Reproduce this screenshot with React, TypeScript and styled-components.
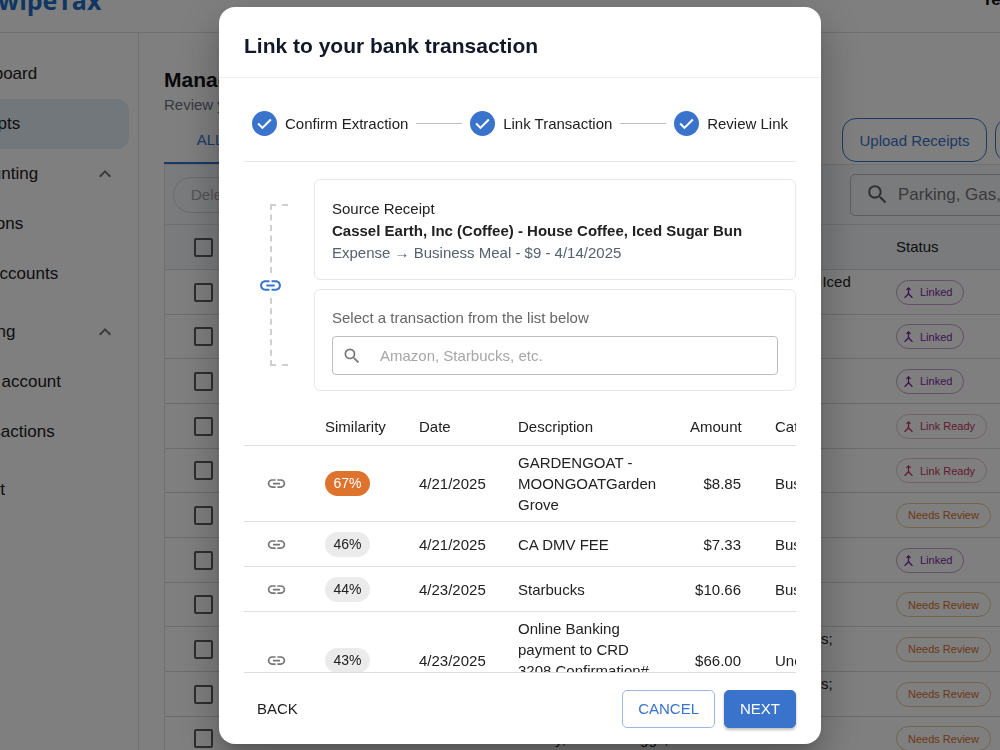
import React from "react";
import styled, { createGlobalStyle } from "styled-components";
import { MdExpandLess, MdLink, MdMerge, MdSearch } from "react-icons/md";

const blue = "#3973cc";
const line = "#e0e0e0";

const GlobalStyle = createGlobalStyle`
  * { box-sizing: border-box; }
  body {
    margin: 0;
    height: 100vh;
    overflow: hidden;
    background: #fff;
    color: #212121;
    font-family: "Liberation Sans", Arial, sans-serif;
    font-size: 15px;
  }
  button, input { font: inherit; }
  h1, h2, p { margin: 0; }
`;

/* ---------- page behind the dialog ---------- */

const Shell = styled.div`
  margin: -32px -160px 0 -56px;
`;

const Header = styled.header`
  display: flex;
  align-items: center;
  justify-content: space-between;
  height: 65px;
  padding: 0 62px 0 40px;
  border-bottom: 1px solid ${line};
`;

const Brand = styled.a`
  color: #1f6fc4;
  font-family: "Open Sans", sans-serif;
  font-size: 25px;
  font-weight: 700;
  text-decoration: none;
`;

const UserName = styled.span`
  font-size: 17px;
  font-weight: 700;
  color: #111;
`;

const Columns = styled.div`
  display: flex;
`;

const Sidebar = styled.nav`
  flex: none;
  width: 195px;
  height: 100vh;
  padding: 16px 9px 0 0;
  border-right: 1px solid ${line};
`;

const NavGroup = styled.div`
  margin-bottom: 8px;
`;

const NavItem = styled.a<{ $active?: boolean; $nested?: boolean }>`
  display: flex;
  align-items: center;
  justify-content: space-between;
  height: 50px;
  padding: 0 12px 0 ${(p) => (p.$nested ? 14 : 10)}px;
  border-radius: 12px;
  background: ${(p) => (p.$active ? "#e3eef7" : "transparent")};
  color: #212121;
  font-size: 17px;
  text-decoration: none;
  white-space: nowrap;

  svg {
    color: #757575;
  }
`;

const Main = styled.main`
  flex: 1;
  min-width: 0;
  padding: 35px 0 0 25px;
`;

const PageTitle = styled.h1`
  font-size: 21px;
  line-height: 24px;
  color: #111;
`;

const PageHint = styled.p`
  margin-top: 3px;
  line-height: 20px;
  color: #6b7280;
`;

const TabRow = styled.div`
  display: flex;
  align-items: flex-end;
  justify-content: space-between;
  height: 50px;
  border-bottom: 1px solid ${line};
`;

const Tab = styled.button`
  height: 49px;
  width: 92px;
  padding: 2px 0 0;
  border: 0;
  border-bottom: 2px solid ${blue};
  background: none;
  color: ${blue};
`;

const TopActions = styled.div`
  display: flex;
  gap: 8px;
  width: 318px;
  padding-bottom: 2px;
`;

const RoundButton = styled.button`
  flex: none;
  width: 145px;
  height: 44px;
  border: 1px solid ${blue};
  border-radius: 14px;
  background: #fff;
  color: ${blue};
`;

const Toolbar = styled.div`
  display: flex;
  align-items: center;
  justify-content: space-between;
  height: 60px;
  padding-left: 8px;
  border-left: 1px solid ${line};
  border-bottom: 1px solid ${line};
  background: #f3f7fb;
`;

const PillButton = styled.button`
  height: 36px;
  padding: 0 17px;
  border: 1px solid #d4d6d8;
  border-radius: 18px;
  background: none;
  color: #a6a6a6;
`;

const PageSearch = styled.label`
  display: flex;
  align-items: center;
  gap: 8px;
  width: 310px;
  height: 42px;
  padding-left: 14px;
  border: 1px solid #bdbdbd;
  border-radius: 5px;
  color: #616161;

  input {
    flex: 1;
    min-width: 0;
    padding: 0;
    border: 0;
    background: none;
    font-size: 17px;
  }

  input::placeholder {
    color: #757575;
  }
`;

const ReceiptTable = styled.table`
  width: 100%;
  table-layout: fixed;
  border-collapse: separate;
  border-spacing: 0;
  border-left: 1px solid ${line};
  line-height: 20px;

  tr {
    height: 45px;
  }

  tbody tr:nth-child(3n + 2) {
    height: 44px;
  }

  th {
    background: #f3f7fb;
    font-weight: 400;
    text-align: left;
  }

  th, td {
    padding: 0 12px 0 0;
    border-bottom: 1px solid #d8d8d8;
  }
`;

const Tick = styled.input`
  display: block;
  width: 19px;
  height: 19px;
  margin: 0 0 0 29px;
  appearance: none;
  border: 2px solid #5c5c5c;
  border-radius: 2px;
`;

const tones = {
  linked: { text: "#7b1fa2", border: "#c3a0d0" },
  ready: { text: "#c2365f", border: "#e0c8ce" },
  review: { text: "#d9702a", border: "#e8c49a" },
};

type Tone = keyof typeof tones;

const StatusChip = styled.span<{ $tone: Tone }>`
  display: inline-flex;
  align-items: center;
  gap: 4px;
  height: 25px;
  padding: 0 11px 0 ${(p) => (p.$tone === "review" ? 11 : 4)}px;
  border: 1px solid ${(p) => tones[p.$tone].border};
  border-radius: 13px;
  color: ${(p) => tones[p.$tone].text};
  font-size: 11px;
  white-space: nowrap;
  vertical-align: middle;
`;

/* ---------- dialog ---------- */

const Backdrop = styled.div`
  position: fixed;
  inset: 0;
  display: flex;
  justify-content: center;
  padding: 7px 0 6px 40px;
  background: rgba(0, 0, 0, 0.5);
`;

const Dialog = styled.section`
  display: flex;
  flex-direction: column;
  width: 602px;
  max-width: 100%;
  border-radius: 16px;
  background: #fff;
  box-shadow: 0 11px 15px -7px rgba(0, 0, 0, 0.2), 0 24px 38px 3px rgba(0, 0, 0, 0.14),
    0 9px 46px 8px rgba(0, 0, 0, 0.12);
`;

const DialogTitle = styled.h2`
  flex: none;
  padding: 25px 25px 0;
  height: 71px;
  border-bottom: 1px solid #eeeeee;
  color: #111827;
  font-size: 21px;
  line-height: 28px;
`;

const DialogBody = styled.div`
  flex: 1;
  min-height: 0;
  margin: 0 25px;
  overflow: hidden auto;
  scrollbar-width: none;
`;

const Stepper = styled.ol`
  display: flex;
  align-items: center;
  gap: 8px;
  margin: 0 0 17px;
  padding: 33px 8px 25px;
  border-bottom: 1px solid #e8e8e8;
  list-style: none;
`;

const Step = styled.li`
  display: flex;
  align-items: center;
  gap: 8px;
  white-space: nowrap;
`;

const Connector = styled.li`
  flex: 1;
  height: 1px;
  background: #bdbdbd;
`;

const LinkArea = styled.div`
  display: flex;
`;

const Bracket = styled.div`
  display: flex;
  flex-direction: column;
  align-items: flex-start;
  width: 70px;
  padding: 25px 0;
  color: ${blue};

  svg {
    margin-left: 14px;
  }
`;

const BracketArm = styled.span<{ $side: "top" | "bottom" }>`
  flex: 1;
  width: 18px;
  margin-left: 26px;
  border-left: 2px dashed #d0d0d0;
  border-${(p) => p.$side}: 2px dashed #d0d0d0;
`;

const Cards = styled.div`
  display: flex;
  flex: 1;
  flex-direction: column;
  gap: 9px;
`;

const Card = styled.div`
  padding: 18px 17px 15px;
  border: 1px solid #e8e8e8;
  border-radius: 6px;
  line-height: 22px;
`;

const Muted = styled.p`
  color: #556070;
`;

const SearchLabel = styled.label`
  display: block;
  margin-bottom: 8px;
  line-height: 20px;
  color: #666;
`;

const SearchField = styled.div`
  display: flex;
  align-items: center;
  gap: 18px;
  height: 39px;
  padding: 0 9px;
  border: 1px solid #bdbdbd;
  border-radius: 4px;
  color: #757575;

  input {
    flex: 1;
    min-width: 0;
    padding: 0;
    border: 0;
    outline: 0;
  }

  input::placeholder {
    color: #a6a6a6;
  }
`;

const TableClip = styled.div`
  margin-top: 17px;
  overflow: hidden;
`;

const MatchTable = styled.table`
  width: 640px;
  table-layout: fixed;
  border-collapse: separate;
  border-spacing: 0;
  line-height: 21px;

  th, td {
    padding: 6px 17px;
    border-bottom: 1px solid ${line};
    font-weight: 400;
    text-align: left;
  }

  th {
    height: 38px;
  }

  td {
    height: 45px;
  }

  th:nth-child(5), td:nth-child(5) {
    text-align: right;
  }

  td:nth-child(6) {
    white-space: nowrap;
  }
`;

const LinkButton = styled.button`
  display: flex;
  justify-content: center;
  width: 30px;
  padding: 0;
  border: 0;
  background: none;
  color: #757575;
`;

const Score = styled.span<{ $strong?: boolean }>`
  display: flex;
  align-items: center;
  justify-content: center;
  width: 45px;
  height: 25px;
  border-radius: 13px;
  background: ${(p) => (p.$strong ? "#de732d" : "#ebebeb")};
  color: ${(p) => (p.$strong ? "#fff" : "#212121")};
  font-size: 14px;
`;

const Footer = styled.footer`
  display: flex;
  flex: none;
  align-items: center;
  gap: 9px;
  height: 72px;
  margin: 0 25px;
  border-top: 1px solid #dcdcdc;
`;

const ActionButton = styled.button<{ $kind: "text" | "outlined" | "filled" }>`
  height: 38px;
  padding: 0 ${(p) => (p.$kind === "text" ? 12 : 15)}px;
  margin-right: ${(p) => (p.$kind === "text" ? "auto" : "0")};
  border: 1px solid ${(p) => (p.$kind === "outlined" ? "#9cb9e5" : p.$kind === "filled" ? blue : "#fff")};
  border-radius: 5px;
  background: ${(p) => (p.$kind === "filled" ? blue : "#fff")};
  box-shadow: ${(p) => (p.$kind === "filled" ? "0 2px 3px rgba(0, 0, 0, 0.25)" : "none")};
  color: ${(p) => (p.$kind === "filled" ? "#fff" : p.$kind === "outlined" ? blue : "#212121")};
`;

const receipts: { text: string; tone: Tone }[] = [
  { text: "Cassel Earth, Inc (Coffee) - House Coffee, Iced Sugar Bun", tone: "linked" },
  { text: "", tone: "linked" },
  { text: "", tone: "linked" },
  { text: "", tone: "ready" },
  { text: "", tone: "ready" },
  { text: "", tone: "review" },
  { text: "", tone: "linked" },
  { text: "", tone: "review" },
  { text: "Office Depot - Printer Paper, Black Ink Pens; Envelopes and Stamps", tone: "review" },
  { text: "Office Depot - Printer Paper, Black Ink Pens; Envelopes and Stamps", tone: "review" },
  { text: "Soy, Milk and Eggs,", tone: "review" },
];

const statusText: Record<Tone, string> = {
  linked: "Linked",
  ready: "Link Ready",
  review: "Needs Review",
};

const matches = [
  { score: 67, date: "4/21/2025", text: "GARDENGOAT - MOONGOATGarden Grove", amount: "$8.85", category: "Business Meal" },
  { score: 46, date: "4/21/2025", text: "CA DMV FEE", amount: "$7.33", category: "Business" },
  { score: 44, date: "4/23/2025", text: "Starbucks", amount: "$10.66", category: "Business Meal" },
  { score: 43, date: "4/23/2025", text: "Online Banking payment to CRD 3208 Confirmation# 1746", amount: "$66.00", category: "Uncategorized" },
];

const steps = ["Confirm Extraction", "Link Transaction", "Review Link"];

const StepCheck = () => (
  <svg width="25" height="25" viewBox="0 0 24 24" aria-hidden="true">
    <circle cx="12" cy="12" r="12" fill={blue} />
    <path d="M5.9 12.1l4.1 4.1 8.1-8.1" fill="none" stroke="#fff" strokeWidth="2" />
  </svg>
);

function Page() {
  return (
    <Shell>
      <Header>
        <Brand href="#">SwipeTax</Brand>
        <UserName>Test Company</UserName>
      </Header>
      <Columns>
        <Sidebar>
          <NavGroup>
            <NavItem href="#">Dashboard</NavItem>
            <NavItem href="#" $active>Receipts</NavItem>
            <NavItem href="#">Accounting<MdExpandLess size={24} /></NavItem>
            <NavItem href="#" $nested>Sections</NavItem>
            <NavItem href="#" $nested>Tax Accounts</NavItem>
          </NavGroup>
          <NavGroup>
            <NavItem href="#">Banking<MdExpandLess size={24} /></NavItem>
            <NavItem href="#" $nested>Bank account</NavItem>
            <NavItem href="#" $nested>Transactions</NavItem>
          </NavGroup>
          <NavGroup>
            <NavItem href="#">Report</NavItem>
          </NavGroup>
        </Sidebar>
        <Main>
          <PageTitle>Manage Receipts</PageTitle>
          <PageHint>Review your receipts</PageHint>
          <TabRow>
            <Tab>ALL</Tab>
            <TopActions>
              <RoundButton>Upload Receipts</RoundButton>
              <RoundButton>Add Receipt</RoundButton>
            </TopActions>
          </TabRow>
          <Toolbar>
            <PillButton disabled>Delete</PillButton>
            <PageSearch>
              <MdSearch size={25} />
              <input aria-label="Search receipts" placeholder="Parking, Gas, etc." />
            </PageSearch>
          </Toolbar>
          <ReceiptTable>
            <colgroup>
              <col style={{ width: 372 }} />
              <col style={{ width: 359 }} />
              <col />
            </colgroup>
            <thead>
              <tr>
                <th><Tick type="checkbox" aria-label="Select all" /></th>
                <th />
                <th>Status</th>
              </tr>
            </thead>
            <tbody>
              {receipts.map((r, i) => (
                <tr key={i}>
                  <td><Tick type="checkbox" aria-label={`Select receipt ${i + 1}`} /></td>
                  <td>{r.text}</td>
                  <td>
                    <StatusChip $tone={r.tone}>
                      {r.tone !== "review" && <MdMerge size={15} />}
                      {statusText[r.tone]}
                    </StatusChip>
                  </td>
                </tr>
              ))}
            </tbody>
          </ReceiptTable>
        </Main>
      </Columns>
    </Shell>
  );
}

export default function App() {
  return (
    <>
      <GlobalStyle />
      <Page />
      <Backdrop>
        <Dialog role="dialog" aria-labelledby="dialog-title">
          <DialogTitle id="dialog-title">Link to your bank transaction</DialogTitle>
          <DialogBody>
            <Stepper>
              {steps.map((label, i) => (
                <React.Fragment key={label}>
                  {i > 0 && <Connector aria-hidden="true" />}
                  <Step><StepCheck />{label}</Step>
                </React.Fragment>
              ))}
            </Stepper>
            <LinkArea>
              <Bracket>
                <BracketArm $side="top" />
                <MdLink size={25} />
                <BracketArm $side="bottom" />
              </Bracket>
              <Cards>
                <Card>
                  <p>Source Receipt</p>
                  <p><strong>Cassel Earth, Inc (Coffee) - House Coffee, Iced Sugar Bun</strong></p>
                  <Muted>Expense → Business Meal - $9 - 4/14/2025</Muted>
                </Card>
                <Card>
                  <SearchLabel htmlFor="search">Select a transaction from the list below</SearchLabel>
                  <SearchField>
                    <MdSearch size={20} />
                    <input id="search" placeholder="Amazon, Starbucks, etc." />
                  </SearchField>
                </Card>
              </Cards>
            </LinkArea>
            <TableClip>
              <MatchTable>
                <colgroup>
                  <col style={{ width: 64 }} />
                  <col style={{ width: 94 }} />
                  <col style={{ width: 99 }} />
                  <col style={{ width: 172 }} />
                  <col style={{ width: 85 }} />
                  <col />
                </colgroup>
                <thead>
                  <tr>
                    <th />
                    <th>Similarity</th>
                    <th>Date</th>
                    <th>Description</th>
                    <th>Amount</th>
                    <th>Category</th>
                  </tr>
                </thead>
                <tbody>
                  {matches.map((m) => (
                    <tr key={m.score}>
                      <td><LinkButton aria-label={`Link ${m.text}`}><MdLink size={21} /></LinkButton></td>
                      <td><Score $strong={m.score > 50}>{m.score}%</Score></td>
                      <td>{m.date}</td>
                      <td>{m.text}</td>
                      <td>{m.amount}</td>
                      <td>{m.category}</td>
                    </tr>
                  ))}
                </tbody>
              </MatchTable>
            </TableClip>
          </DialogBody>
          <Footer>
            <ActionButton $kind="text">BACK</ActionButton>
            <ActionButton $kind="outlined">CANCEL</ActionButton>
            <ActionButton $kind="filled">NEXT</ActionButton>
          </Footer>
        </Dialog>
      </Backdrop>
    </>
  );
}
